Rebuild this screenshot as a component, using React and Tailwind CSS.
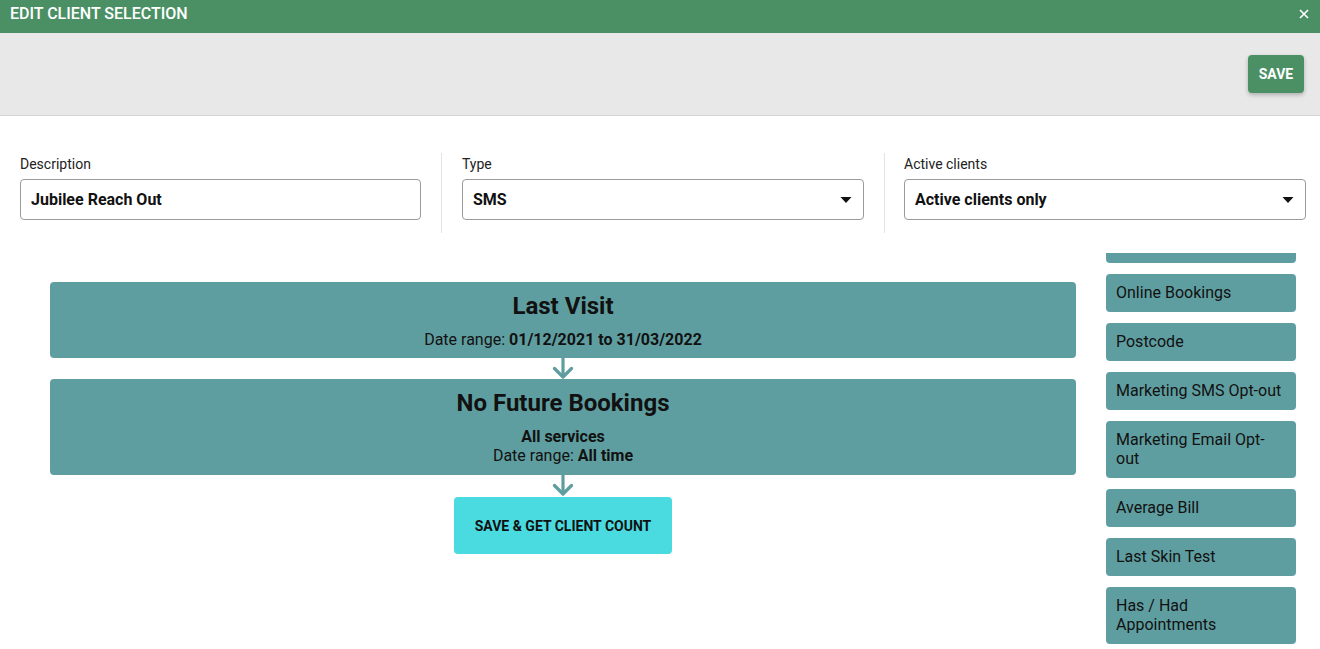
import React from "react";

const font = { fontFamily: "Roboto, 'Noto Sans', Arial, sans-serif" };

function Caret() {
  return (
    <svg width="12" height="7" viewBox="0 0 12 7" className="absolute right-[11px] top-1/2 -translate-y-1/2">
      <path d="M0.5 0.5 L11.5 0.5 L6 6.5 Z" fill="#111" />
    </svg>
  );
}

function Arrow() {
  return (
    <div className="flex justify-center h-[21px]">
      <svg width="22" height="21" viewBox="0 0 22 21">
        <path d="M11 0 L11 19" stroke="#5f9ea0" strokeWidth="3.2" fill="none" />
        <path d="M2.5 10.5 L11 19 L19.5 10.5" stroke="#5f9ea0" strokeWidth="3.2" fill="none" strokeLinecap="round" strokeLinejoin="round" />
      </svg>
    </div>
  );
}

function Field({ label, value, select, className }) {
  return (
    <div className={className}>
      <div className="text-[14px] leading-[16px] text-[#222] mb-[7px]">{label}</div>
      <div className="relative h-[41px] border border-[#9a9a9a] rounded-[4px] flex items-center pl-[10px] bg-white">
        <span className="text-[16px] font-bold text-[#111]">{value}</span>
        {select && <Caret />}
      </div>
    </div>
  );
}

const items = [
  "Last Visit",
  "Online Bookings",
  "Postcode",
  "Marketing SMS Opt-out",
  "Marketing Email Opt-out",
  "Average Bill",
  "Last Skin Test",
  "Has / Had Appointments",
];

export default function App() {
  return (
    <div style={font} className="w-[1320px] h-[649px] overflow-hidden bg-white flex flex-col">
      <div className="h-[33px] bg-[#4b9065] flex items-center justify-between pl-[10px] pr-[10px] pb-[6px] shrink-0">
        <span className="text-white text-[16px] font-medium leading-[19px]">EDIT CLIENT SELECTION</span>
        <svg width="10" height="10" viewBox="0 0 10 10" className="mr-[1px]">
          <path d="M1 1 L9 9 M9 1 L1 9" stroke="white" strokeWidth="1.6" />
        </svg>
      </div>
      <div className="h-[83px] bg-[#e8e8e8] border-b border-[#d6d6d6] flex items-center justify-end pr-[16px] shrink-0">
        <button className="w-[56px] h-[38px] bg-[#4b9065] rounded-[4px] text-white text-[14px] font-bold shadow-[0_2px_4px_rgba(0,0,0,0.25)] pt-[1px]">
          SAVE
        </button>
      </div>
      <div className="flex pt-[37px] shrink-0">
        <Field className="w-[442px] pl-[20px] pr-[20px] pt-[3px] pb-[13px] border-r border-[#e4e4e4]" label="Description" value="Jubilee Reach Out" />
        <Field className="w-[443px] pl-[20px] pr-[20px] pt-[3px] pb-[13px] border-r border-[#e4e4e4]" label="Type" value="SMS" select />
        <Field className="flex-1 pl-[19px] pr-[14px] pt-[3px] pb-[13px]" label="Active clients" value="Active clients only" select />
      </div>
      <div className="flex mt-[20px] flex-1 min-h-0">
        <div className="w-[1026px] ml-[50px] pt-[29px]">
          <div className="h-[76px] bg-[#5f9ea0] rounded-[4px] flex flex-col items-center pt-[9px]">
            <div className="text-[24px] font-bold leading-[30px] text-[#111]">Last Visit</div>
            <div className="text-[16px] leading-[19px] text-[#111] mt-[9px]">
              Date range: <b>01/12/2021 to 31/03/2022</b>
            </div>
          </div>
          <Arrow />
          <div className="h-[96px] bg-[#5f9ea0] rounded-[4px] flex flex-col items-center pt-[9px]">
            <div className="text-[24px] font-bold leading-[30px] text-[#111]">No Future Bookings</div>
            <div className="text-[16px] leading-[19px] text-[#111] mt-[9px] font-bold">All services</div>
            <div className="text-[16px] leading-[19px] text-[#111]">
              Date range: <b>All time</b>
            </div>
          </div>
          <Arrow />
          <div className="flex justify-center mt-[1px]">
            <button className="w-[218px] h-[57px] bg-[#4adbe1] rounded-[4px] text-[14px] font-bold text-[#111] pt-[2px]">
              SAVE &amp; GET CLIENT COUNT
            </button>
          </div>
        </div>
        <div className="w-[190px] ml-[30px] overflow-hidden">
          <div className="flex flex-col gap-[11px] mt-[-28px]">
            {items.map((t) => (
              <div key={t} className="bg-[#5f9ea0] rounded-[4px] px-[10px] pt-[9px] pb-[10px] text-[16px] leading-[19px] text-[#111]">
                {t}
              </div>
            ))}
          </div>
        </div>
      </div>
    </div>
  );
}
